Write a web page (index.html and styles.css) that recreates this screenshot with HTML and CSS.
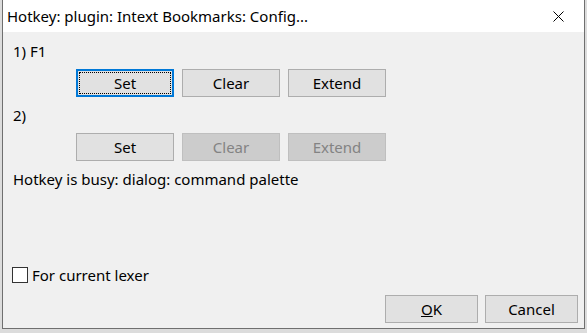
FILE: index.html
```html
<!DOCTYPE html>
<html lang="en">
<head>
  <meta charset="UTF-8">
  <title>Hotkey</title>
  <link rel="stylesheet" href="styles.css">
</head>
<body>
  <div class="window">
    <!-- Title bar -->
    <div class="titlebar">
      <span class="title">Hotkey: plugin: Intext Bookmarks: Config...</span>
      <span class="close">
        <svg width="11" height="11" viewBox="0 0 11 11">
          <path d="M0.5 0.5 L10.5 10.5 M10.5 0.5 L0.5 10.5" stroke="#000" stroke-width="1" fill="none"/>
        </svg>
      </span>
    </div>

    <div class="content">
      <!-- Hotkey 1 -->
      <div class="label">1) F1</div>
      <div class="btn-row">
        <button class="btn focused"><span class="focus-rect">Set</span></button>
        <button class="btn">Clear</button>
        <button class="btn">Extend</button>
      </div>

      <!-- Hotkey 2 -->
      <div class="label">2)</div>
      <div class="btn-row">
        <button class="btn">Set</button>
        <button class="btn" disabled>Clear</button>
        <button class="btn" disabled>Extend</button>
      </div>

      <div class="status">Hotkey is busy: dialog: command palette</div>

      <!-- Bottom section -->
      <label class="check">
        <span class="box"></span>
        For current lexer
      </label>
      <div class="footer">
        <button class="btn small"><u>O</u>K</button>
        <button class="btn small">Cancel</button>
      </div>
    </div>
  </div>
</body>
</html>
```

FILE: styles.css
```css
/* General */
body {
  margin: 0;
  padding: 0;
  width: 587px;
  height: 333px;
  overflow: hidden;
  background-color: #dcdcdc;
  font-family: 'Noto Sans', 'Open Sans', sans-serif;
  font-size: 15px;
  color: #000;
}

/* Dialog window */
.window {
  margin-left: 2px;
  width: 581px;
  height: 328px;
  border: 1px solid #6f6f6f;
  border-top: none;
  background-color: #f0f0f0;
  display: flex;
  flex-direction: column;
}

/* Title bar */
.titlebar {
  height: 32px;
  background-color: #fff;
  display: flex;
  align-items: center;
  justify-content: space-between;
  padding: 0 20px 0 4px;
}

.title {
  margin-top: -1px;
}

.close {
  display: flex;
}

/* Main area */
.content {
  flex: 1;
  display: flex;
  flex-direction: column;
  padding: 9px 6px 5px 10px;
}

.label {
  height: 20px;
  line-height: 20px;
}

.btn-row {
  display: flex;
  gap: 8px;
  margin: 8px 0 8px 63px;
}

.btn {
  width: 98px;
  height: 28px;
  padding: 0;
  background-color: #e1e1e1;
  border: 1px solid #adadad;
  font-family: inherit;
  font-size: 15px;
  color: #000;
  display: flex;
  align-items: center;
  justify-content: center;
}

.btn:disabled {
  background-color: #cccccc;
  border-color: #bfbfbf;
  color: #838383;
}

/* Default / focused button */
.btn.focused {
  border: 2px solid #0078d7;
  padding: 1px;
}

.focus-rect {
  flex: 1;
  align-self: stretch;
  display: flex;
  align-items: center;
  justify-content: center;
  border: 1px dotted #000;
}

.status {
  height: 20px;
  line-height: 20px;
  margin-top: 0px;
}

/* Checkbox */
.check {
  margin-top: auto;
  display: flex;
  align-items: center;
  gap: 4px;
  margin-left: -1px;
  height: 20px;
}

.box {
  width: 14px;
  height: 14px;
  border: 1px solid #333;
  background-color: #fff;
}

/* OK / Cancel */
.footer {
  display: flex;
  justify-content: flex-end;
  gap: 7px;
  margin-top: 10px;
}

.btn.small {
  width: 93px;
}
```
